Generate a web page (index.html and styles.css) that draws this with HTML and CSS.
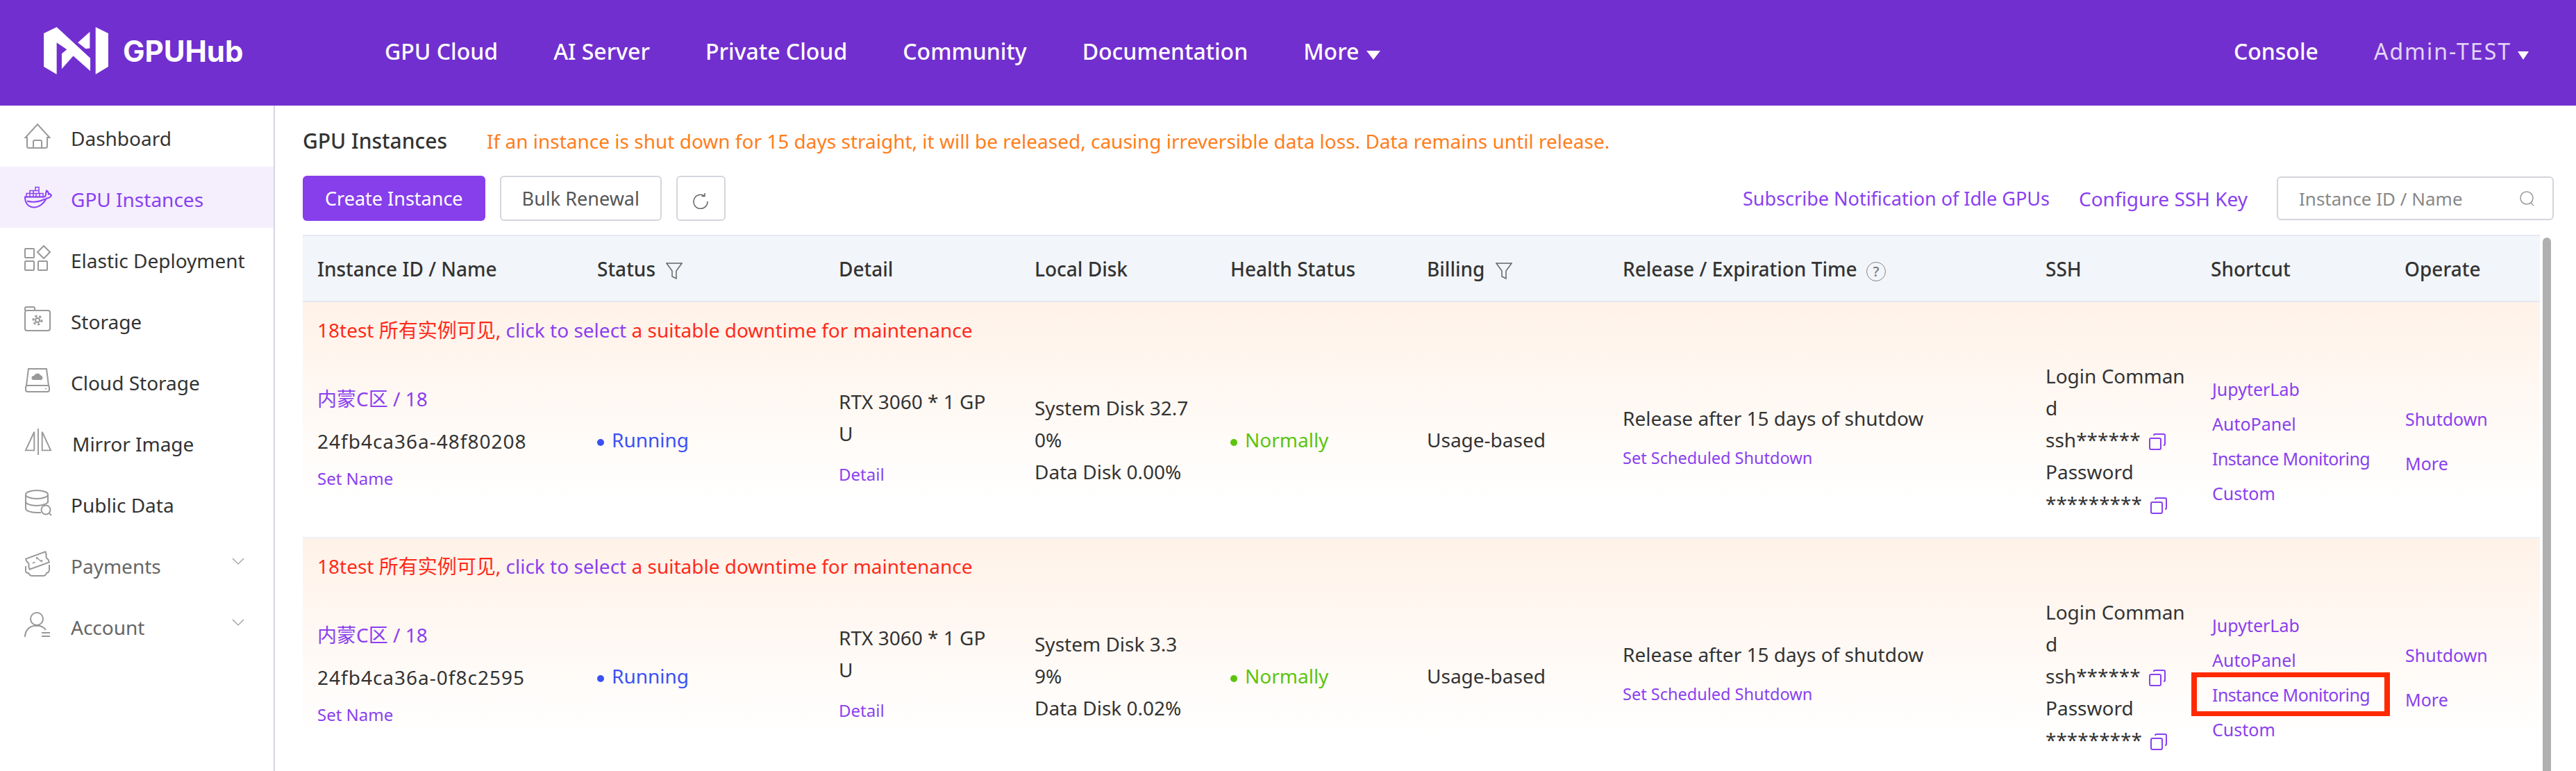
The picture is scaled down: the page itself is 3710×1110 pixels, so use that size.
FILE: index.html
```html
<!DOCTYPE html>
<html lang="en">
<head>
    <meta charset="UTF-8">
    <title>GPU Instances</title>
    <link rel="stylesheet" href="styles.css">
</head>
<body>
    <header class="topbar">
        <a class="logo">
            <svg class="logo-mark" viewBox="190 113 280 205">
                <path d="M190 140L246 113L392 248V304L318 238L268 295V228L290 210L246 180V318L190 285Z"/>
                <path d="M338 180L390 133V205L372 207Z"/>
                <path d="M415 113L470 140V285L415 318Z"/>
            </svg>
            <span class="logo-text">GPUHub</span>
        </a>
        <nav class="topnav">
            <a>GPU Cloud</a>
            <a>AI Server</a>
            <a>Private Cloud</a>
            <a>Community</a>
            <a>Documentation</a>
            <a>More<i class="caret"></i></a>
        </nav>
        <div class="topnav topnav-right">
            <a>Console</a>
            <a class="user">Admin-TEST<i class="caret caret-small"></i></a>
        </div>
    </header>

    <div class="layout">
        <aside class="sidebar">
            <a class="side-item">
                <svg class="side-icon" viewBox="0 0 38 38"><path d="M4 21H1.500L19 2L36.500 21H33V33.500Q33 36 30.500 36H6.500Q4 36 4 33.500Z"/><path d="M13 36V27Q13 25 15 25H23Q25 25 25 27V36"/></svg>
                <span>Dashboard</span>
            </a>
            <a class="side-item active">
                <svg class="side-icon side-icon-wide" viewBox="0 0 40 31"><path d="M1 15H28C30 15 31 13 31 10L32 6C34 7 35 9 35 11C37 10 38 11 39 13C37 16 35 17 32 17C28 25 21 30 14 30C6 30 1 24 1 15Z"/><path d="M4 21C12 23 22 22 30 18"/><path class="thin" d="M3 10H27V15H3ZM8 6H21V10H8ZM16 1H21V6H16ZM8 10V15M13 6V15M17 10V15M22 10V15"/></svg>
                <span>GPU Instances</span>
            </a>
            <a class="side-item">
                <svg class="side-icon" viewBox="0 0 38 38"><rect x="1" y="5" width="13" height="13" rx="1"/><path d="M28 1L37 10L28 19L19 10Z"/><rect x="1" y="23" width="13" height="13" rx="1"/><rect x="20" y="23" width="13" height="13" rx="1"/></svg>
                <span>Elastic Deployment</span>
            </a>
            <a class="side-item">
                <svg class="side-icon" viewBox="0 0 38 38"><path d="M1 6V3Q1 1 3 1H13Q15 1 15 3V6"/><rect x="1" y="6" width="36" height="29" rx="3"/><circle cx="19" cy="20" r="3"/><circle class="dashed" cx="19" cy="20" r="6"/></svg>
                <span>Storage</span>
            </a>
            <a class="side-item">
                <svg class="side-icon" viewBox="0 0 38 38"><path d="M3 26L6 2H32L35 26"/><rect x="2" y="26" width="34" height="9" rx="3"/><path class="solid" d="M13 18A3 3 0 0 1 14 12A5 5 0 0 1 23 11A4 4 0 0 1 25 18Z"/><circle class="solid" cx="31" cy="30.500" r="1"/></svg>
                <span>Cloud Storage</span>
            </a>
            <a class="side-item">
                <svg class="side-icon side-icon-wide" viewBox="0 0 42 40"><path d="M15 5V33H2ZM27 5V33H40Z"/><path d="M21 0V40"/></svg>
                <span class="mirror-label">Mirror Image</span>
            </a>
            <a class="side-item">
                <svg class="side-icon side-icon-wide" viewBox="0 0 40 38"><ellipse cx="18" cy="7" rx="16" ry="6"/><path d="M2 7V27C2 30 8 33 18 33H24M34 7V19M2 17C2 20 8 23 18 23C26 23 34 20 34 17"/><circle cx="31" cy="29" r="6.500"/><path d="M36 34L39 37"/></svg>
                <span>Public Data</span>
            </a>
            <a class="side-item muted">
                <svg class="side-icon" viewBox="0 0 38 38"><g transform="rotate(-20 19 14)"><path d="M4 6H34V10Q31 14 34 18V22H4V18Q7 14 4 10Z"/><path class="thin" d="M11 15H15M19 9L24 18M19 10h1v1h-1zM24 16h1v1h-1z"/></g><path d="M2 22V29Q2 32 6 32Q8 36 11 36H27Q31 36 32 32Q36 31 36 27V20"/></svg>
                <span>Payments</span>
                <svg class="chevron" viewBox="0 0 18 10"><path d="M1 1L9 9L17 1"/></svg>
            </a>
            <a class="side-item muted">
                <svg class="side-icon" viewBox="0 0 38 38"><circle cx="18" cy="10" r="9"/><path d="M1 36C1 27 7 21 14 20H22C26 21 29 23 31 26"/><path d="M25 30H37M25 35H37"/></svg>
                <span>Account</span>
                <svg class="chevron" viewBox="0 0 18 10"><path d="M1 1L9 9L17 1"/></svg>
            </a>
        </aside>

        <main class="content">
            <div class="title-line">
                <h1>GPU Instances</h1>
                <p class="warning">If an instance is shut down for 15 days straight, it will be released, causing irreversible data loss. Data remains until release.</p>
            </div>

            <div class="toolbar">
                <button class="btn btn-primary">Create Instance</button>
                <button class="btn">Bulk Renewal</button>
                <button class="btn btn-icon">
                    <svg viewBox="0 0 24 24"><path d="M17.500 5A10 10 0 1 0 22 13"/><path d="M18 1V5.500H13.500"/></svg>
                </button>
                <div class="toolbar-right">
                    <a class="link link-notify">Subscribe Notification of Idle GPUs</a>
                    <a class="link">Configure SSH Key</a>
                    <div class="search">
                        <span>Instance ID / Name</span>
                        <svg viewBox="0 0 24 24"><circle cx="11" cy="11" r="9"/><path d="M17 18L21 22"/></svg>
                    </div>
                </div>
            </div>

            <div class="table-wrap">
                <div class="table">
                    <div class="grid table-head">
                        <div>Instance ID / Name</div>
                        <div>Status <svg class="filter" viewBox="0 0 24 24"><path d="M1 1H23L15 12V23L9 20V12Z"/></svg></div>
                        <div>Detail</div>
                        <div>Local Disk</div>
                        <div>Health Status</div>
                        <div>Billing <svg class="filter" viewBox="0 0 24 24"><path d="M1 1H23L15 12V23L9 20V12Z"/></svg></div>
                        <div>Release / Expiration Time <span class="help">?</span></div>
                        <div>SSH</div>
                        <div>Shortcut</div>
                        <div>Operate</div>
                    </div>

                    <section class="instance">
                        <p class="maintenance">18test 所有实例可见, <a class="link">click to select</a> a suitable downtime for maintenance</p>
                        <div class="grid">
                            <div class="cell-name">
                                <a class="link zone">内蒙C区 / 18</a>
                                <div class="inst-id">24fb4ca36a-48f80208</div>
                                <a class="link small">Set Name</a>
                            </div>
                            <div><span class="status running">Running</span></div>
                            <div class="cell-detail">
                                <div>RTX 3060 * 1 GP<br>U</div>
                                <a class="link small">Detail</a>
                            </div>
                            <div>System Disk 32.7<br>0%<br>Data Disk 0.00%</div>
                            <div><span class="status healthy">Normally</span></div>
                            <div>Usage-based</div>
                            <div class="cell-release">
                                <div>Release after 15 days of shutdow</div>
                                <a class="link small">Set Scheduled Shutdown</a>
                            </div>
                            <div class="cell-ssh">
                                Login Comman<br>d<br>
                                ssh****** <svg class="copy" viewBox="0 0 24 24"><rect x="1" y="7" width="16" height="16" rx="2"/><path d="M7 3Q7 1 9 1H21Q23 1 23 3V15Q23 17 21 17"/></svg><br>
                                Password<br>
                                ********* <svg class="copy" viewBox="0 0 24 24"><rect x="1" y="7" width="16" height="16" rx="2"/><path d="M7 3Q7 1 9 1H21Q23 1 23 3V15Q23 17 21 17"/></svg>
                            </div>
                            <div class="cell-shortcut">
                                <a class="link action">JupyterLab</a>
                                <a class="link action">AutoPanel</a>
                                <a class="link action action-long">Instance Monitoring</a>
                                <a class="link action">Custom</a>
                            </div>
                            <div class="cell-operate">
                                <a class="link action">Shutdown</a>
                                <a class="link action">More</a>
                            </div>
                        </div>
                    </section>

                    <section class="instance">
                        <p class="maintenance">18test 所有实例可见, <a class="link">click to select</a> a suitable downtime for maintenance</p>
                        <div class="grid">
                            <div class="cell-name">
                                <a class="link zone">内蒙C区 / 18</a>
                                <div class="inst-id">24fb4ca36a-0f8c2595</div>
                                <a class="link small">Set Name</a>
                            </div>
                            <div><span class="status running">Running</span></div>
                            <div class="cell-detail">
                                <div>RTX 3060 * 1 GP<br>U</div>
                                <a class="link small">Detail</a>
                            </div>
                            <div>System Disk 3.3<br>9%<br>Data Disk 0.02%</div>
                            <div><span class="status healthy">Normally</span></div>
                            <div>Usage-based</div>
                            <div class="cell-release">
                                <div>Release after 15 days of shutdow</div>
                                <a class="link small">Set Scheduled Shutdown</a>
                            </div>
                            <div class="cell-ssh">
                                Login Comman<br>d<br>
                                ssh****** <svg class="copy" viewBox="0 0 24 24"><rect x="1" y="7" width="16" height="16" rx="2"/><path d="M7 3Q7 1 9 1H21Q23 1 23 3V15Q23 17 21 17"/></svg><br>
                                Password<br>
                                ********* <svg class="copy" viewBox="0 0 24 24"><rect x="1" y="7" width="16" height="16" rx="2"/><path d="M7 3Q7 1 9 1H21Q23 1 23 3V15Q23 17 21 17"/></svg>
                            </div>
                            <div class="cell-shortcut">
                                <a class="link action">JupyterLab</a>
                                <a class="link action">AutoPanel</a>
                                <a class="link action action-long marked">Instance Monitoring</a>
                                <a class="link action">Custom</a>
                            </div>
                            <div class="cell-operate">
                                <a class="link action">Shutdown</a>
                                <a class="link action">More</a>
                            </div>
                        </div>
                    </section>
                </div>
                <div class="scroll-thumb"></div>
            </div>
        </main>
    </div>
</body>
</html>
```

FILE: styles.css
```css
html, body {
    height: 100%;
}

body {
    margin: 0;
    height: 1110px;
    overflow: hidden;
    display: flex;
    flex-direction: column;
    font-family: 'Noto Sans', 'Noto Sans CJK SC', sans-serif;
    font-size: 28px;
    color: #333;
    background: white;
}

/* Top bar */
.topbar {
    height: 152px;
    flex: none;
    display: flex;
    align-items: center;
    padding: 0 68px 6px 63px;
    box-sizing: border-box;
    background-color: #722fcf;
    color: white;
}

.logo {
    display: flex;
    align-items: center;
    gap: 21px;
    width: 491px;
}

.logo-mark {
    width: 93px;
    height: 68px;
    fill: white;
}

.logo-text {
    font-family: 'Inter', sans-serif;
    font-size: 42px;
    font-weight: 700;
}

.topnav {
    display: flex;
    gap: 80px;
    font-size: 32px;
    font-weight: 500;
}

.topnav-right {
    margin-left: auto;
}

.user {
    color: #e3d5f7;
    font-weight: 400;
    letter-spacing: 2px;
}

.caret {
    display: inline-block;
    margin-left: 11px;
    border-top: 13px solid white;
    border-left: 10px solid transparent;
    border-right: 10px solid transparent;
    vertical-align: 0;
}

.caret-small {
    margin-left: 9px;
    border-top-width: 12px;
    border-left-width: 8.500px;
    border-right-width: 8.500px;
}

/* Sidebar */
.layout {
    flex: 1;
    min-height: 0;
    display: flex;
}

.sidebar {
    width: 396px;
    flex: none;
    box-sizing: border-box;
    border-right: 2px solid #d6d6e2;
}

.side-item {
    height: 88px;
    display: flex;
    align-items: center;
    padding: 0 42px 0 35px;
    color: #333;
    white-space: nowrap;
}

.side-item span {
    flex: 1;
    padding-top: 5px;
}

.side-item .mirror-label {
    padding-left: 2px;
}

.side-item.active {
    background-color: #f5effd;
    color: #8a40f0;
}

.side-item.muted {
    color: #666;
}

.side-icon {
    width: 38px;
    height: 38px;
    flex: none;
    margin-right: 29px;
    fill: none;
    stroke: #999;
    stroke-width: 2;
}

.side-icon-wide {
    width: 40px;
    margin-right: 27px;
}

.active .side-icon {
    stroke: #8a40f0;
}

.side-icon .thin {
    stroke-width: 1.500;
}

.side-icon .solid {
    fill: #999;
    stroke: none;
}

.side-icon .dashed {
    stroke-width: 3;
    stroke-dasharray: 3 3;
}

.chevron {
    width: 18px;
    height: 10px;
    margin-top: -8px;
    fill: none;
    stroke: #999;
    stroke-width: 1.200;
}

/* Main */
.content {
    flex: 1;
    min-width: 0;
    padding-left: 40px;
}

.title-line {
    height: 101px;
    display: flex;
    align-items: center;
    gap: 57px;
    box-sizing: border-box;
}

h1 {
    margin: 0;
    font-size: 30px;
    font-weight: 500;
}

.warning {
    margin: 0;
    color: #ff7d1a;
}

.toolbar {
    display: flex;
    align-items: center;
    gap: 21px;
    height: 65px;
    padding-right: 32px;
    font-size: 27px;
}

.btn {
    height: 65px;
    padding: 0 30px;
    border: 2px solid #d3d6dc;
    border-radius: 6px;
    background: white;
    color: #555;
    font: inherit;
}

.btn-primary {
    border: none;
    padding: 0 32px;
    background-color: #873fec;
    color: white;
}

.btn-icon {
    padding: 0;
    width: 71px;
}

.btn-icon svg {
    width: 24px;
    height: 24px;
    fill: none;
    stroke: #666;
    stroke-width: 1.500;
    vertical-align: middle;
}

.toolbar-right {
    margin-left: auto;
    display: flex;
    align-items: center;
    gap: 42px;
    font-size: 28px;
}

.link-notify {
    font-size: 27px;
}

.search {
    width: 399px;
    height: 63px;
    display: flex;
    align-items: center;
    justify-content: space-between;
    padding: 0 24px 0 30px;
    box-sizing: border-box;
    border: 2px solid #d3d6dc;
    border-radius: 6px;
    color: #888;
    font-size: 26px;
}

.search svg {
    width: 24px;
    height: 24px;
    fill: none;
    stroke: #999;
    stroke-width: 1.500;
}

.link {
    color: #8a40f0;
}

/* Table */
.table-wrap {
    display: flex;
    gap: 4px;
    margin-top: 20px;
    padding-right: 36px;
}

.table {
    flex: 1;
    min-width: 0;
}

.scroll-thumb {
    width: 12px;
    margin-top: 4px;
    border-radius: 6px 6px 0 0;
    background-color: #b0b0b0;
}

.grid {
    display: grid;
    grid-template-columns: 403px 348px 282px 282px 283px 282px 609px 238px 279px 216px;
    align-items: center;
}

.grid > div {
    padding: 0 21px;
    line-height: 46px;
    min-width: 0;
}

.table-head {
    height: 97px;
    box-sizing: border-box;
    border-top: 2px solid #e6e8f2;
    border-bottom: 2px solid #e6e8f2;
    background-color: #f2f5f9;
    font-weight: 500;
}

.filter {
    width: 24px;
    height: 24px;
    margin-left: 8px;
    vertical-align: -4px;
    fill: none;
    stroke: #666;
    stroke-width: 1.500;
}

.help {
    display: inline-block;
    width: 26px;
    height: 26px;
    margin-left: 6px;
    border: 1.500px solid #888;
    border-radius: 50%;
    color: #777;
    font-size: 20px;
    font-weight: 500;
    line-height: 26px;
    text-align: center;
}

.instance {
    height: 340px;
    box-sizing: border-box;
    border-bottom: 2px solid #eef0f5;
    background: linear-gradient(#fff2e8, #fff 85%);
}

.maintenance {
    margin: 0;
    padding: 17px 21px 0;
    line-height: 46px;
    color: #ff2a1a;
}

.instance .grid {
    padding: 20px 0 26px;
}

.zone {
    display: block;
}

.inst-id {
    margin-top: 15px;
    letter-spacing: 1px;
}

.grid > .cell-name {
    padding-bottom: 4px;
}

.small {
    display: block;
    font-size: 24px;
}

.cell-name .small {
    margin-top: 8px;
}

.grid > .cell-detail {
    padding-bottom: 6px;
}

.cell-detail .small {
    margin-top: 13px;
}

.grid > .cell-release {
    padding-bottom: 5px;
}

.cell-release .small {
    margin-top: 11px;
    font-size: 23.500px;
}

.cell-ssh {
    white-space: nowrap;
}

.status::before {
    content: '';
    display: inline-block;
    width: 10px;
    height: 10px;
    margin-right: 11px;
    border-radius: 50%;
    background-color: currentColor;
    vertical-align: 2px;
}

.running {
    color: #3b50f5;
}

.healthy {
    color: #5cc40e;
}

.copy {
    width: 24px;
    height: 24px;
    margin-left: 5px;
    vertical-align: -4px;
    fill: none;
    stroke: #8a40f0;
    stroke-width: 2;
}

.action {
    display: block;
    font-size: 25px;
}

.action-long {
    letter-spacing: -0.6px;
}

.cell-shortcut .action {
    line-height: 50px;
}

.grid > .cell-shortcut {
    padding-top: 4px;
    padding-left: 23px;
    padding-right: 0;
}

.grid > .cell-operate {
    padding-top: 4px;
    padding-left: 22px;
    line-height: 64px;
}

.marked {
    position: relative;
    width: fit-content;
}

.marked::after {
    content: '';
    position: absolute;
    inset: -7px -29px -6px -30px;
    border: solid #ff2a00;
    border-width: 7px 8px;
}
```
